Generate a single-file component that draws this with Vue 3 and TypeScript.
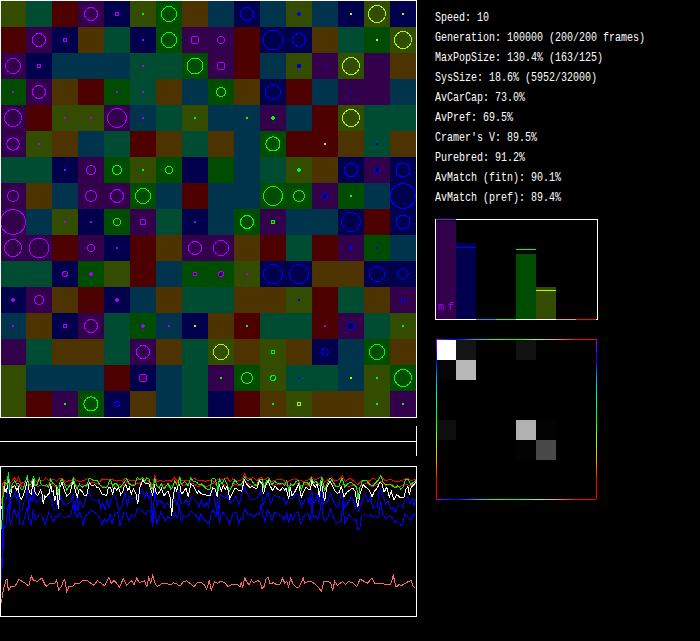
<script setup lang="ts">
type Hue = 'V' | 'B' | 'C' | 'T' | 'G' | 'Y' | 'O' | 'R'

interface Marker {
  x: number
  y: number
  hue: Hue
  kind: string
  r: number
}

const bright: Record<Hue, string> = {
  V: '#aa00ff', B: '#0000ff', C: '#00aaff', T: '#00ffaa',
  G: '#00ff00', Y: '#aaff00', O: '#ffaa00', R: '#ff0000',
}
const dark: Record<Hue, string> = {
  V: '#33004c', B: '#00004c', C: '#00334c', T: '#004c33',
  G: '#004c00', Y: '#334c00', O: '#4c3300', R: '#4c0000',
}

const habitat = [
  'YTRVBYGOCBCYCBYB',
  'RVBOTBGVVRBBOTGY',
  'VBCCCTTGVRCYVYVO',
  'GVORGTOCGOBRCVVC',
  'VRYYVCTYCCVCRYTT',
  'VYOCTROTOCGRROTO',
  'TTBVGYGBGCTYOBVB',
  'VOCVVGCRCCGGVGCB',
  'VCYBGVTBCGVCCBRB',
  'VVRVBROVVORTRVGC',
  'TTBGYRCGGYBBOOBB',
  'BVORBCOTTOOYRTOV',
  'COBVTGCBORTTRVTY',
  'VTOOTVOTYOYOBCGO',
  'YCCCRBCTVGYTTCYG',
  'YRVGBOCTBROYOOYV',
]

/* column : hue : shape, where "." is a dot, "+" a cross, "sN" a square, a number a radius */
const population = [
  '3:V:7 4:V:s2 5:G:. 6:G:8 9:B:7 11:B:+ 13:Y:. 14:Y:9 15:Y:.',
  '1:V:7 2:V:s2 5:V:. 6:G:8 7:V:4.5 8:V:4 10:B:10.5 11:B:7 14:Y:. 15:Y:9',
  '0:V:8 1:V:s2 5:V:. 7:G:8.5 8:V:4.5 11:B:s2 12:B:. 13:Y:9',
  '0:V:. 1:V:7 4:V:. 5:V:. 8:G:5 10:B:8 13:B:.',
  '0:V:9 2:V:. 3:V:. 4:V:10 5:V:. 7:G:. 9:G:. 10:G:+ 13:Y:9',
  '0:V:6.7 1:V:. 10:G:7.6 12:Y:. 14:B:.',
  '2:V:. 3:V:5 4:G:5 5:G:. 6:G:4 11:G:+ 13:B:7 14:B:3 15:B:7.5',
  '0:V:6 3:V:6 4:V:7 5:G:8 10:G:10 11:G:6 12:B:3 13:G:. 15:B:13',
  '0:V:13 2:V:. 3:V:. 4:G:4 5:V:s3 7:V:. 9:G:7 10:G:s2 13:B:10 15:B:7.5',
  '0:V:9 1:V:10.5 3:V:4 4:V:. 7:V:7 8:V:8 13:B:+ 14:B:.',
  '2:V:3 3:V:+ 7:V:s2 8:V:3 9:V:. 10:B:10 11:B:10 14:B:8 15:B:5.7',
  '0:V:+ 1:V:5 4:V:+ 11:B:. 15:B:s2',
  '0:V:. 2:V:s2 3:V:7 5:V:+ 6:V:. 7:Y:. 9:G:. 12:V:. 13:B:4 15:G:.',
  '5:V:7 8:Y:8 10:G:s2 12:B:3.7 14:G:8',
  '5:V:4.5 8:G:. 9:G:6 10:G:3 11:B:. 13:Y:. 14:G:. 15:G:9',
  '2:G:. 3:G:7.6 4:B:3 10:G:. 11:Y:s2 14:G:. 15:G:.',
]

const tiles = habitat.flatMap((row, r) =>
  [...row].map((h, c) => ({ x: c * 26, y: 1 + r * 26, fill: dark[h as Hue] })),
)

const markers: Marker[] = population.flatMap((row, r) =>
  row.split(' ').map((item) => {
    const [c, hue, shape] = item.split(':')
    const kind = shape === '.' ? 'dot' : shape === '+' ? 'cross' : shape[0] === 's' ? 'square' : 'circle'
    const size = kind === 'square' ? Number(shape.slice(1)) : kind === 'circle' ? Number(shape) : 0
    return { x: Number(c) * 26 + 13, y: r * 26 + 14, hue: hue as Hue, kind, r: size - 0.5 }
  }),
)

/* Samples are stored at three units per pixel, in consecutive windows. */
const join = (step: number, parts: string[]) =>
  parts
    .flatMap((p, i) =>
      p.split(' ').map((s) => {
        const [x, y] = s.split(',').map(Number)
        return `${((x + i * step) / 3).toFixed(1)},${((y - 6) / 3).toFixed(1)}`
      }),
    )
    .join(' ')

const series = [
  { name: 'low', color: '#0000ff', points: join(420, [
    '4,348 8,280 12,190 18,185 22,140 26,120 31,185 36,165 43,135 50,160 56,140 60,178 68,182 74,160 82,130 86,165 94,180 100,135 106,170 112,165 118,150 126,155 136,182 146,145 154,155 160,175 168,155 174,160 180,148 192,160 206,158 214,150 220,120 226,150 232,160 238,145 244,155 250,185 256,155 264,150 272,138 284,145 296,155 306,182 314,165 322,175 330,150 336,180 346,145 354,145 360,185 372,145 380,150 386,170 396,150 404,160 412,132',
    '0,135 8,142 16,152 24,140 32,140 38,190 43,130 50,178 56,165 62,145 68,155 76,172 84,155 90,165 98,162 104,145 112,165 118,120 124,175 130,155 140,160 148,150 153,142 162,150 170,155 176,172 182,150 190,165 200,175 208,180 214,145 220,138 228,160 233,110 238,180 244,150 250,145 256,155 262,165 269,180 280,145 290,145 296,178 304,160 308,165 314,135 322,150 334,152 340,160 350,150 358,152 364,120 370,158 376,172 382,138 390,150 396,172 404,145 418,150',
    '0,155 8,158 14,172 20,145 26,178 32,148 38,168 46,148 54,145 62,180 70,160 80,148 86,155 92,175 95,100 100,162 108,155 114,165 120,140 125,105 130,165 136,170 144,160 152,135 160,160 168,178 184,172 188,110 194,178 200,165 208,152 216,162 226,172 228,165 234,198 240,190 246,155 254,150 264,160 270,152 280,162 286,155 296,160 302,110 308,150 318,165 328,155 336,160 344,175 352,172 364,185 370,175 374,150 382,155 392,170 398,155 408,148',
  ]) },
  { name: 'high', color: '#0000ff', points: join(420, [
    '4,348 6,280 10,150 16,110 20,100 26,60 30,140 34,100 40,98 46,85 50,110 55,75 60,140 66,138 72,115 78,105 83,70 86,140 92,95 97,115 100,70 105,105 112,115 122,100 128,108 136,98 150,98 156,118 162,138 168,135 172,95 178,120 182,98 188,115 196,122 206,118 214,110 220,90 224,150 230,90 234,140 240,110 250,130 258,100 268,85 275,105 290,110 298,108 302,132 308,118 315,138 322,105 328,132 334,105 342,92 350,105 356,140 364,135 370,105 376,85 382,130 388,95 396,105 406,100 412,115',
    '0,92 8,78 14,102 20,85 26,105 33,85 38,180 44,75 50,125 58,108 66,115 72,132 80,115 90,130 98,118 104,105 112,125 118,78 122,118 132,115 140,108 146,125 154,98 162,105 172,115 176,130 184,108 192,130 200,115 206,130 212,85 222,100 230,140 236,155 240,92 250,98 258,102 262,92 269,118 278,112 288,95 296,122 304,100 312,65 320,85 330,105 344,105 354,98 363,80 370,125 378,98 384,85 392,120 402,95 418,98',
    '0,105 10,102 18,122 28,100 38,105 48,88 56,95 64,130 74,108 84,100 88,122 95,78 102,118 112,95 116,120 125,70 131,118 138,115 144,110 152,88 160,112 170,130 178,120 184,85 188,80 194,130 202,120 212,100 220,108 226,132 230,118 236,145 242,120 250,105 256,90 264,115 272,95 278,132 292,128 297,85 302,75 308,90 316,120 324,110 332,135 340,132 346,145 354,125 362,122 368,132 374,110 384,98 390,120 398,105 402,125 408,105',
  ]) },
  { name: 'red-low', color: '#ff0000', points: join(420, [
    '5,190 10,75 20,58 31,60 38,70 50,65 60,62 70,70 82,60 92,68 102,60 114,68 124,62 140,68 152,58 164,68 178,65 190,60 204,65 220,55 232,68 246,62 260,68 270,55 290,58 304,65 318,70 330,58 346,68 360,62 372,65 380,55 396,62',
    '0,58 10,50 22,58 32,62 40,78 46,60 58,68 70,60 84,68 96,65 104,58 118,54 130,65 144,60 160,58 174,68 186,62 200,68 212,62 224,55 232,68 242,58 256,64 270,75 284,60 298,66 314,52 330,62 346,66 360,55 372,68 386,58 400,65 410,60',
    '0,62 10,58 24,66 36,62 50,58 64,66 78,60 90,68 96,55 110,62 124,56 136,68 150,56 164,66 178,68 190,60 204,68 220,62 234,75 246,62 260,58 276,68 290,62 304,52 318,64 332,60 346,68 362,66 376,60 390,65 408,58',
  ]) },
  { name: 'red-high', color: '#ff0000', points: join(420, [
    '5,120 8,60 14,50 25,45 30,60 36,50 44,42 50,52 56,38 62,60 72,55 82,45 92,52 100,45 110,52 120,48 130,50 137,42 146,50 152,45 164,48 170,52 176,45 186,42 196,55 206,50 216,48 220,40 228,50 240,52 250,50 268,42 280,50 300,52 308,45 320,48 332,45 346,50 356,48 368,52 376,42 390,50 404,50',
    '0,45 10,42 24,50 34,60 38,65 44,33 50,52 62,50 72,52 84,48 94,52 104,42 112,52 119,38 124,50 140,48 152,52 162,42 174,50 184,48 196,52 210,48 222,52 238,45 252,48 262,40 270,55 278,45 292,52 304,48 314,30 320,42 332,45 340,40 350,50 362,40 372,48 384,40 394,52 404,50 412,46',
    '0,45 10,48 18,56 28,50 44,44 58,50 74,52 88,46 95,38 104,48 116,42 125,38 134,55 146,45 154,42 164,52 178,46 187,36 196,52 204,46 209,42 220,50 234,62 246,50 258,48 268,52 280,42 292,50 302,36 316,50 332,46 344,52 358,52 374,46 382,42 392,50 408,46',
  ]) },
  { name: 'white', color: '#ffffff', points: join(420, [
    '5,135 8,110 12,65 15,85 18,75 20,88 22,60 25,30 28,70 31,98 35,75 38,68 44,65 50,78 55,70 58,95 64,105 70,95 76,75 83,45 88,85 94,90 100,45 103,80 108,90 113,95 118,85 122,78 126,90 130,120 134,95 138,100 143,92 148,88 152,60 156,85 160,80 164,110 168,95 170,65 175,135 180,70 186,55 192,75 200,96 210,88 220,48 226,80 232,98 238,75 246,82 252,94 260,95 268,55 275,65 285,62 290,70 298,72 305,90 320,95 325,70 332,72 338,90 343,70 350,78 356,72 362,92 368,85 372,70 378,62 383,78 388,70 394,90 400,75 408,90 413,120',
    '0,70 8,48 15,58 28,60 38,95 42,60 47,82 52,92 58,85 64,72 72,95 84,80 90,100 95,155 100,95 105,68 110,80 115,62 119,60 124,90 130,85 138,72 145,98 152,60 160,65 168,80 172,88 176,80 182,88 192,92 210,95 218,72 225,75 232,98 237,60 244,80 250,65 256,75 262,65 269,103 276,90 285,72 295,78 305,82 313,48 320,60 330,70 338,68 350,75 358,50 366,58 370,90 376,70 384,48 390,65 398,80 405,65 412,75',
    '0,80 8,70 14,78 18,72 26,105 31,70 36,95 44,85 50,72 56,60 64,100 72,80 78,70 86,78 92,75 95,48 100,62 106,70 112,58 118,98 124,52 130,90 134,112 140,70 150,50 160,70 166,82 172,88 178,85 184,68 192,98 200,85 210,78 218,72 225,82 233,130 240,90 250,62 258,70 268,78 276,98 284,80 292,72 300,55 306,60 312,85 320,70 328,98 334,82 342,108 350,92 360,100 372,100 378,75 384,68 388,92 394,70 402,62 408,52',
  ]) },
  { name: 'green', color: '#00ff00', points: join(420, [
    '5,195 8,110 11,70 14,55 18,58 22,60 25,25 28,55 31,85 36,62 44,50 50,60 56,58 62,75 68,78 74,60 82,38 86,62 92,62 98,45 101,35 105,65 112,62 118,42 124,62 132,65 140,62 146,70 152,45 158,58 164,62 170,65 175,92 180,55 186,45 192,58 200,78 206,68 214,62 220,42 226,65 232,75 238,60 246,70 254,65 262,62 268,42 280,48 290,48 298,60 306,70 320,72 328,52 332,48 338,68 344,58 350,60 360,72 370,58 380,45 388,60 396,65 404,65 412,40',
    '0,48 8,40 14,52 20,42 28,45 34,75 40,70 44,42 50,65 58,72 64,58 72,75 84,58 92,75 98,70 104,50 110,62 114,65 119,38 124,62 134,52 144,65 152,42 160,52 170,55 176,62 184,60 192,68 200,75 210,75 216,45 224,42 230,62 234,80 238,45 246,60 254,45 262,62 268,82 276,65 284,48 294,60 304,62 314,38 322,50 332,45 342,60 350,65 356,48 366,45 372,72 380,50 388,45 396,62 404,52 412,58',
    '0,60 6,58 14,65 20,50 26,78 32,60 40,65 48,52 56,50 64,78 72,55 80,55 88,62 94,42 102,58 108,50 114,60 120,65 125,38 130,60 134,82 142,58 150,42 160,55 168,68 176,68 186,42 194,68 204,58 214,55 222,62 230,70 234,105 240,70 248,50 258,48 268,60 278,65 286,58 294,50 302,35 310,55 318,62 328,60 336,65 346,72 354,65 362,75 370,68 376,48 384,45 392,62 400,55 408,50',
  ]) },
  { name: 'salmon', color: '#ff6666', points: join(624, [
    '4,418 10,378 18,348 22,346 25,380 34,366 44,368 50,358 56,346 66,352 76,358 86,366 94,336 100,348 112,353 120,346 126,343 134,360 140,366 150,358 158,360 166,356 170,348 176,378 184,368 188,356 194,346 200,383 208,366 218,368 226,358 236,360 250,348 262,350 270,356 282,364 292,350 304,358 314,366 320,353 326,340 334,358 342,350 350,358 358,370 370,344 380,363 388,356 396,350 402,363 410,342 418,356 426,353 434,350 440,370 446,340 452,358 458,334 466,360 472,368 484,360 500,358 512,363 520,356 530,360 540,366 550,353 560,350 572,360 582,368 592,356 604,356 614,363 620,376',
    '4,348 10,378 20,353 28,358 38,352 50,356 60,368 70,362 88,362 96,368 100,356 104,372 110,342 118,356 124,362 130,348 136,356 150,350 156,354 162,374 168,368 174,346 180,338 186,360 196,356 206,362 216,360 224,342 230,358 236,352 242,368 248,342 254,358 262,368 272,372 286,342 290,358 300,352 310,352 320,360 330,368 340,382 348,352 358,352 368,356 374,380 380,352 388,364 396,358 404,352 412,362 422,352 436,358 446,368 456,346 468,352 478,358 492,342 500,358 520,358 534,362 548,360 556,334 564,370 572,362 582,364 592,358 602,352 610,350 616,368 622,372',
  ]) },
]

const stats = [
  'Speed: 10',
  'Generation: 100000 (200/200 frames)',
  'MaxPopSize: 130.4% (163/125)',
  'SysSize: 18.6% (5952/32000)',
  'AvCarCap: 73.0%',
  'AvPref: 69.5%',
  "Cramer's V: 89.5%",
  'Purebred: 91.2%',
  'AvMatch (fitn): 90.1%',
  'AvMatch (pref): 89.4%',
]

const bars: { hue: Hue; slot: number; top: number; mark: number }[] = [
  { hue: 'V', slot: 0, top: 2, mark: 0 },
  { hue: 'B', slot: 1, top: 24, mark: 28 },
  { hue: 'C', slot: 2, top: 100, mark: 100 },
  { hue: 'T', slot: 3, top: 100, mark: 100 },
  { hue: 'G', slot: 4, top: 35, mark: 30 },
  { hue: 'Y', slot: 5, top: 68, mark: 71 },
  { hue: 'O', slot: 6, top: 100, mark: 100 },
  { hue: 'R', slot: 7, top: 100, mark: 100 },
]

const pairings = [
  { c: 0, r: 0, fill: '#ffffff' },
  { c: 1, r: 0, fill: '#141414' },
  { c: 4, r: 0, fill: '#121212' },
  { c: 0, r: 1, fill: '#050505' },
  { c: 1, r: 1, fill: '#b8b8b8' },
  { c: 0, r: 4, fill: '#0f0f0f' },
  { c: 4, r: 4, fill: '#b1b1b1' },
  { c: 5, r: 4, fill: '#030303' },
  { c: 4, r: 5, fill: '#030303' },
  { c: 5, r: 5, fill: '#484848' },
]

const stops = (Object.keys(bright) as Hue[]).map((h, i) => ({ offset: i / 8, color: bright[h] }))
</script>

<template>
  <main class="sim">
    <section class="left">
      <svg class="world" width="417" height="418" shape-rendering="crispEdges">
        <rect v-for="(t, i) in tiles" :key="i" :x="t.x" :y="t.y" width="26" height="26" :fill="t.fill" />
        <template v-for="(m, i) in markers" :key="'m' + i">
          <rect v-if="m.kind === 'dot'" :x="m.x - 1" :y="m.y - 1" width="2" height="2" :fill="bright[m.hue]" />
          <path v-else-if="m.kind === 'cross'" :d="`M${m.x - 2} ${m.y - 1}h1v-1h2v1h1v2h-1v1h-2v-1h-1z`" :fill="bright[m.hue]" />
          <rect
            v-else-if="m.kind === 'square'"
            :x="m.x - m.r" :y="m.y - m.r" :width="m.r * 2" :height="m.r * 2"
            :fill="dark[m.hue]" :stroke="bright[m.hue]"
          />
          <circle v-else :cx="m.x" :cy="m.y" :r="m.r" :fill="dark[m.hue]" :stroke="bright[m.hue]" />
        </template>
        <rect class="frame" x="0.5" y="0.5" width="416" height="417" />
      </svg>
      <svg class="timeline" width="417" height="30" shape-rendering="crispEdges">
        <rect x="0" y="15" width="417" height="1" fill="#fff" />
        <rect x="416" y="0" width="1" height="30" fill="#fff" />
      </svg>
      <svg class="history" width="417" height="151" shape-rendering="crispEdges">
        <polyline v-for="s in series" :key="s.name" :points="s.points" :stroke="s.color" fill="none" />
        <rect class="frame" x="0.5" y="0.5" width="416" height="150" />
      </svg>
    </section>
    <section class="right">
      <ul class="stats">
        <li v-for="s in stats" :key="s">{{ s }}</li>
      </ul>
      <svg class="bars" width="163" height="101" shape-rendering="crispEdges">
        <rect class="frame" x="0.5" y="0.5" width="162" height="100" />
        <g v-for="b in bars" :key="b.hue">
          <rect :x="1 + b.slot * 20" :y="b.top" width="20" :height="100 - b.top" :fill="dark[b.hue]" />
          <rect :x="1 + b.slot * 20" :y="b.mark" width="20" height="1" :fill="bright[b.hue]" />
        </g>
        <text class="sex" x="3" y="91">m</text>
        <text class="sex" x="13" y="91">f</text>
      </svg>
      <svg class="matrix" width="161" height="161" shape-rendering="crispEdges">
        <defs>
          <linearGradient id="across" gradientUnits="userSpaceOnUse" x1="0" y1="0" x2="161" y2="0">
            <stop v-for="s in stops" :key="s.color" :offset="s.offset" :stop-color="s.color" />
          </linearGradient>
          <linearGradient id="down" gradientUnits="userSpaceOnUse" x1="0" y1="0" x2="0" y2="161">
            <stop v-for="s in stops" :key="s.color" :offset="s.offset" :stop-color="s.color" />
          </linearGradient>
        </defs>
        <rect v-for="(p, i) in pairings" :key="i" :x="p.c * 20" :y="1 + p.r * 20" width="20" height="20" :fill="p.fill" />
        <rect x="0" y="0" width="161" height="1" fill="url(#across)" />
        <rect x="0" y="160" width="160" height="1" fill="url(#across)" />
        <rect x="0" y="0" width="1" height="161" fill="url(#down)" />
        <rect x="160" y="0" width="1" height="160" fill="url(#down)" />
      </svg>
    </section>
  </main>
</template>

<style>
body {
  background: #000;
}
</style>

<style scoped>
.sim {
  display: flex;
  gap: 18px;
  width: 700px;
  height: 641px;
  background: #000;
  overflow: hidden;
}
.left,
.right {
  display: flex;
  flex-direction: column;
  align-items: flex-start;
}
.left {
  width: 417px;
}
svg {
  display: block;
  flex: none;
}
.timeline {
  margin-top: 8px;
}
.history {
  margin-top: 10px;
}
.frame {
  fill: none;
  stroke: #fff;
}
.stats {
  list-style: none;
  margin: 0;
  padding: 8px 0 11px;
  color: #fff;
  font: 10px/20px 'Liberation Mono', monospace;
}
.stats li {
  height: 20px;
  white-space: pre;
  transform: scaleY(1.3);
}
.matrix {
  margin: 19px 0 0 1px;
}
.sex {
  fill: #aa00ff;
  font: 10px 'Liberation Mono', monospace;
}
</style>
